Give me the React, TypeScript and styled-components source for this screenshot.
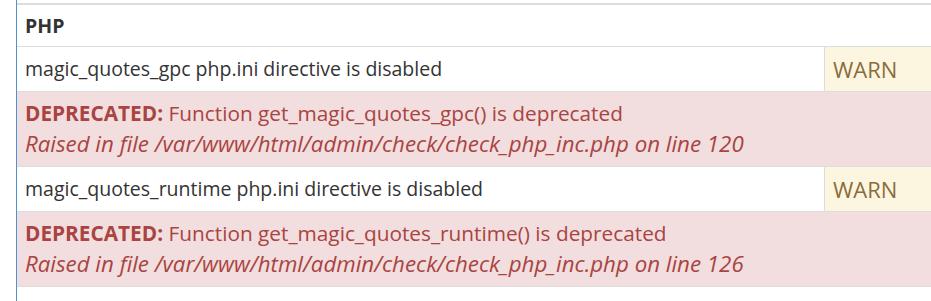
import React from 'react';
import styled, { createGlobalStyle } from 'styled-components';

const GlobalStyle = createGlobalStyle`
  html, body {
    margin: 0;
    padding: 0;
    background: #fff;
    overflow: hidden;
  }
  body {
    font-family: "Open Sans", "Liberation Sans", sans-serif;
    font-size: 19.5px;
    color: #333;
  }
`;

const Panel = styled.div`
  margin-left: 16px;
  border-left: 1px solid #4f93d2;
  padding-top: 3px;
  height: 301px;
  box-sizing: border-box;
  overflow: hidden;
`;

const Checks = styled.div`
  border-top: 2px solid #ddd;
`;

const SectionHead = styled.div<{ $top?: number }>`
  padding: ${(p) => p.$top ?? 7}px 8px 7px;
  line-height: 27px;
  font-weight: 700;
  border-bottom: 1px solid #ddd;
`;

const Row = styled.div`
  display: flex;
  border-bottom: 1px solid #ddd;
`;

const Label = styled.div`
  flex: 1;
  padding: 8px;
  line-height: 28px;
`;

const Status = styled.div`
  width: 90px;
  flex: none;
  padding: 8px;
  line-height: 28px;
  font-size: 22px;
  border-left: 1px solid #ddd;
  background: #fcf6e1;
  color: #8a6d3b;
`;

const Notice = styled.div`
  padding: 7px 8px 8px;
  line-height: 28px;
  font-size: 20.8px;
  background: #f2dede;
  color: #a94442;
  border-bottom: 1px solid #ddd;
  white-space: nowrap;

  b {
    font-weight: 700;
  }
`;

const Where = styled.div`
  margin-top: 3px;
  font-style: italic;
  font-size: 22.3px;
`;

type Check = { label: string; status: string; func: string; line: number };

const checks: Check[] = [
  { label: 'magic_quotes_gpc php.ini directive is disabled', status: 'WARN', func: 'get_magic_quotes_gpc', line: 120 },
  { label: 'magic_quotes_runtime php.ini directive is disabled', status: 'WARN', func: 'get_magic_quotes_runtime', line: 126 },
];

export default function App() {
  return (
    <>
      <GlobalStyle />
      <Panel>
        <Checks>
          <SectionHead>PHP</SectionHead>
          {checks.map((c) => (
            <React.Fragment key={c.func}>
              <Row>
                <Label>{c.label}</Label>
                <Status>{c.status}</Status>
              </Row>
              <Notice>
                <div>
                  <b>DEPRECATED:</b> Function {c.func}() is deprecated
                </div>
                <Where>
                  Raised in file /var/www/html/admin/check/check_php_inc.php on line {c.line}
                </Where>
              </Notice>
            </React.Fragment>
          ))}
          <SectionHead $top={8}>Database</SectionHead>
        </Checks>
      </Panel>
    </>
  );
}
